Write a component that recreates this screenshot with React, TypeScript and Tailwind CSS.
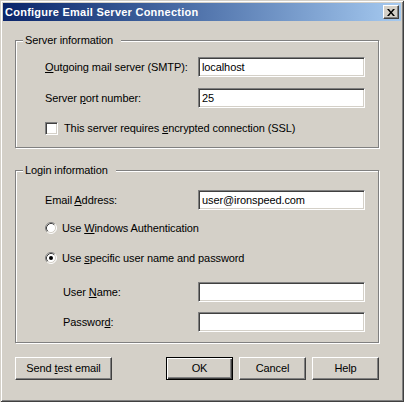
import React from "react";

const field =
  "h-[20px] w-[167px] bg-white border border-t-[#808080] border-l-[#808080] border-b-white border-r-white shadow-[inset_1px_1px_0_#404040,inset_-1px_-1px_0_#d4d0c8] flex items-center pl-[3px]";

const btn =
  "h-[23px] flex items-center justify-center border border-t-white border-l-white border-b-[#404040] border-r-[#404040] shadow-[inset_-1px_-1px_0_#808080,inset_1px_1px_0_#d4d0c8]";

function Radio({ checked }: { checked?: boolean }) {
  return (
    <svg width="12" height="12" viewBox="0 0 12 12" className="shrink-0">
      <circle cx="6" cy="6" r="5" fill="#ffffff" />
      <path d="M2.11 9.89 A5.5 5.5 0 0 1 9.89 2.11" stroke="#808080" fill="none" strokeWidth="1" />
      <path d="M9.89 2.11 A5.5 5.5 0 0 1 2.11 9.89" stroke="#ffffff" fill="none" strokeWidth="1" />
      <path d="M2.82 9.18 A4.5 4.5 0 0 1 9.18 2.82" stroke="#404040" fill="none" strokeWidth="1" />
      <path d="M9.18 2.82 A4.5 4.5 0 0 1 2.82 9.18" stroke="#d4d0c8" fill="none" strokeWidth="1" />
      {checked && <circle cx="6" cy="6" r="2" fill="#000000" />}
    </svg>
  );
}

function GroupBox({
  label,
  className,
  children,
}: {
  label: string;
  className: string;
  children: React.ReactNode;
}) {
  return (
    <div
      className={
        "relative ml-[15px] w-[364px] border border-[#808080] shadow-[1px_1px_0_#ffffff,inset_1px_1px_0_#ffffff] " +
        className
      }
    >
      <span className="absolute -top-[7px] left-[7px] bg-[#d4d0c8] pl-[2px] pr-[8px] leading-[13px]">
        {label}
      </span>
      {children}
    </div>
  );
}

export default function App() {
  return (
    <div className="w-[404px] h-[402px] bg-[#d4d0c8] shadow-[inset_1px_1px_0_#d4d0c8,inset_-1px_-1px_0_#404040,inset_2px_2px_0_#ffffff,inset_-2px_-2px_0_#808080] flex flex-col font-['Liberation_Sans',Arial,sans-serif] text-[11px] leading-[13px] tracking-[-0.1px] text-black">
      <div className="mx-[3px] mt-[3px] h-[18px] flex items-center justify-between bg-linear-to-r from-[#0a246a] to-[#a6caf0] pl-[2px] pr-[2px]">
        <span className="font-bold text-white tracking-[0.25px]">Configure Email Server Connection</span>
        <div className="w-[16px] h-[14px] flex items-center justify-center bg-[#d4d0c8] border border-t-white border-l-white border-b-[#404040] border-r-[#404040] shadow-[inset_-1px_-1px_0_#808080]">
          <svg width="8" height="7" viewBox="0 0 8 7">
            <path d="M0 0h2l2 2.5L6 0h2L5 3.5 8 7H6L4 4.5 2 7H0l3-3.5z" fill="#000000" />
          </svg>
        </div>
      </div>

      <GroupBox label="Server information" className="mt-[19px] h-[108px] pt-[16px]">
        <div className="flex items-center h-[20px] pl-[29px]">
          <span className="w-[153px]">
            <u>O</u>utgoing mail server (SMTP):
          </span>
          <div className={field}>localhost</div>
        </div>
        <div className="flex items-center h-[20px] pl-[29px] mt-[11px]">
          <span className="w-[153px]">
            Server <u>p</u>ort number:
          </span>
          <div className={field}>25</div>
        </div>
        <div className="flex items-center h-[20px] pl-[29px] mt-[10px]">
          <div className="w-[13px] h-[13px] bg-white border border-t-[#808080] border-l-[#808080] border-b-white border-r-white shadow-[inset_1px_1px_0_#404040,inset_-1px_-1px_0_#d4d0c8]" />
          <span className="ml-[6px]">
            This server requires <u>e</u>ncrypted connection (SSL)
          </span>
        </div>
      </GroupBox>

      <GroupBox label="Login information" className="mt-[22px] h-[173px] pt-[19px]">
        <div className="flex items-center h-[20px] pl-[29px]">
          <span className="w-[153px]">
            Email <u>A</u>ddress:
          </span>
          <div className={field}>user@ironspeed.com</div>
        </div>
        <div className="flex items-center h-[20px] pl-[29px] mt-[8px]">
          <Radio />
          <span className="ml-[5px]">
            Use <u>W</u>indows Authentication
          </span>
        </div>
        <div className="flex items-center h-[20px] pl-[29px] mt-[10px]">
          <Radio checked />
          <span className="ml-[5px]">
            Use <u>s</u>pecific user name and password
          </span>
        </div>
        <div className="flex items-center h-[20px] pl-[47px] mt-[14px]">
          <span className="w-[135px]">
            User <u>N</u>ame:
          </span>
          <div className={field} />
        </div>
        <div className="flex items-center h-[20px] pl-[47px] mt-[10px]">
          <span className="w-[135px]">
            Passwor<u>d</u>:
          </span>
          <div className={field} />
        </div>
      </GroupBox>

      <div className="flex ml-[15px] mt-[14px]">
        <div className={btn + " w-[97px]"}>
          <span>
            Send <u>t</u>est email
          </span>
        </div>
        <div className="ml-[54px] w-[67px] h-[23px] flex items-center justify-center border border-black shadow-[inset_1px_1px_0_#ffffff,inset_-1px_-1px_0_#404040,inset_-2px_-2px_0_#808080]">
          OK
        </div>
        <div className={btn + " ml-[6px] w-[67px]"}>Cancel</div>
        <div className={btn + " ml-[6px] w-[67px]"}>Help</div>
      </div>
    </div>
  );
}
